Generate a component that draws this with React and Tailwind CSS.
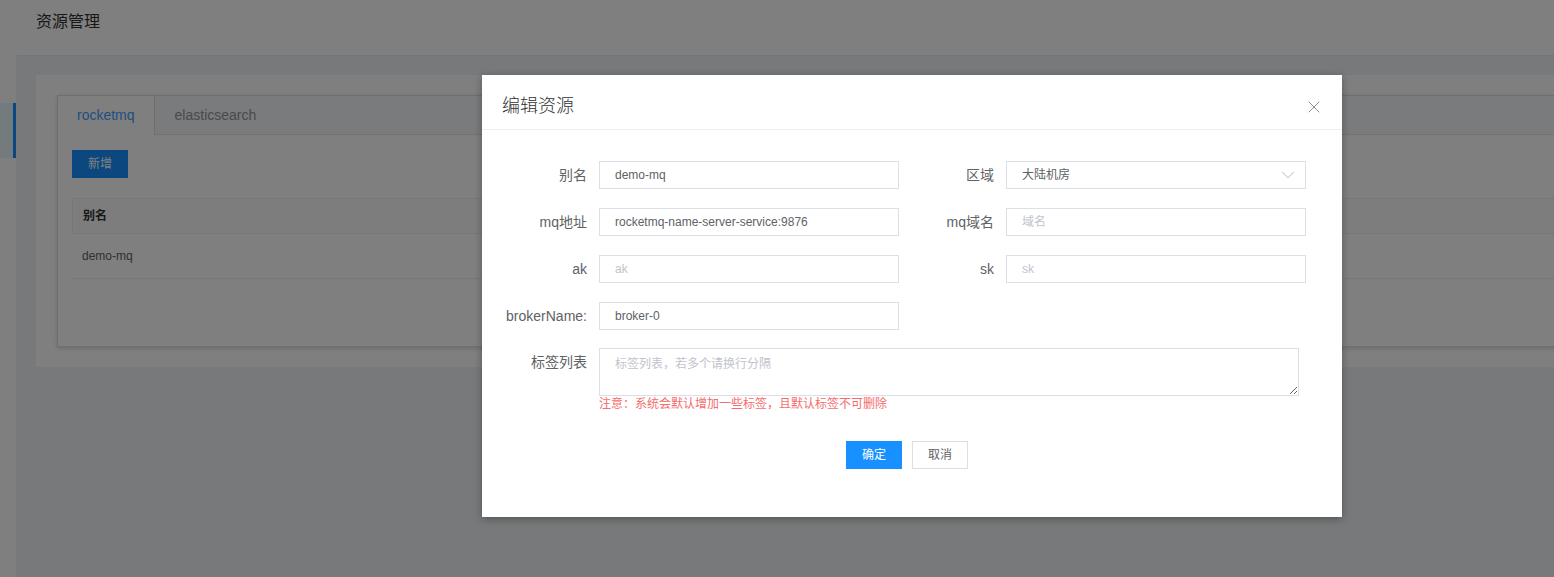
import { X, ChevronDown } from "lucide-react";

const inputCls =
  "w-[300px] h-[28px] border border-[#dcdfe6] bg-white px-[15px] text-[12px] text-[#606266] outline-none placeholder:text-[#c0c4cc]";

const LeftField = ({ label, value, placeholder }) => (
  <div className="flex w-[417px]">
    <label className="w-[105px] mr-[12px] text-right text-[14px] leading-[28px] text-[#606266]">
      {label}
    </label>
    <input className={inputCls} defaultValue={value} placeholder={placeholder} />
  </div>
);

const RightField = ({ label, value, placeholder }) => (
  <div className="flex">
    <label className="w-[95px] mr-[12px] text-right text-[14px] leading-[28px] text-[#606266]">
      {label}
    </label>
    <input className={inputCls} defaultValue={value} placeholder={placeholder} />
  </div>
);

export default function App() {
  return (
    <div className="relative w-[1554px] h-[577px] overflow-hidden bg-[#f0f2f5] flex font-['Liberation_Sans','Noto_Sans_CJK_SC',sans-serif]">
      {/* sidebar */}
      <aside className="w-[16px] shrink-0 bg-white">
        <div className="mt-[103px] h-[55px] bg-[#e6f7ff] border-r-[3px] border-[#1890ff]" />
      </aside>

      {/* main */}
      <main className="flex-1 flex flex-col min-w-0">
        <header className="h-[55px] shrink-0 bg-white pl-[20px] pt-[12px] shadow-[0_1px_2px_rgba(0,0,0,0.04)]">
          <h1 className="text-[16px] leading-[20px] text-[#303133]">资源管理</h1>
        </header>

        <div className="pt-[20px] pl-[20px]">
          <div className="bg-white pt-[20px] pl-[21px] pb-[20px] mr-[-100px]">
            <div className="border border-[#dcdfe6] bg-white h-[252px] shadow-[0_2px_4px_rgba(0,0,0,0.12),0_0_6px_rgba(0,0,0,0.04)]">
              <div className="flex h-[39px] bg-[#f5f7fa] border-b border-[#e4e7ed]">
                <div className="px-[19px] h-[39px] bg-white border-r border-[#dcdfe6] text-[14px] leading-[38px] text-[#409eff]">
                  rocketmq
                </div>
                <div className="px-[20px] h-[38px] text-[14px] leading-[38px] text-[#909399]">
                  elasticsearch
                </div>
              </div>
              <div className="py-[15px] px-[14px]">
                <button className="w-[56px] h-[28px] bg-[#1890ff] text-white text-[12px]">新增</button>
                <div className="mt-[20px]">
                  <div className="h-[36px] bg-[#fafafa] border border-[#ebeef5] pl-[10px] flex items-center text-[12px] font-bold text-[#303133]">
                    别名
                  </div>
                  <div className="h-[45px] border-b border-[#ebeef5] pl-[10px] flex items-center text-[12px] text-[#606266]">
                    demo-mq
                  </div>
                </div>
              </div>
            </div>
          </div>
        </div>
      </main>

      {/* mask */}
      <div className="absolute inset-0 bg-black/50" />

      {/* dialog */}
      <div className="absolute left-[482px] top-[75px] w-[860px] h-[442px] bg-white shadow-[0_2px_8px_rgba(0,0,0,0.3)]">
        <div className="relative h-[55px] border-b border-[#ebeef5] pl-[20px] pt-[19px]">
          <h2 className="text-[18px] leading-[24px] text-[#303133] font-light">编辑资源</h2>
          <X size={20} strokeWidth={1.2} className="absolute right-[18px] top-[22px] text-[#909399]" />
        </div>

        <div className="pt-[31px]">
          <div className="flex flex-col gap-[19px]">
            <div className="flex">
              <LeftField label="别名" value="demo-mq" />
              <div className="flex">
                <label className="w-[95px] mr-[12px] text-right text-[14px] leading-[28px] text-[#606266]">
                  区域
                </label>
                <div className="relative w-[300px] h-[28px] border border-[#dcdfe6] px-[15px] text-[12px] leading-[26px] text-[#606266]">
                  大陆机房
                  <ChevronDown
                    size={22}
                    strokeWidth={1.1}
                    className="absolute right-[6px] top-[2px] text-[#c0c4cc]"
                  />
                </div>
              </div>
            </div>
            <div className="flex">
              <LeftField label="mq地址" value="rocketmq-name-server-service:9876" />
              <RightField label="mq域名" placeholder="域名" />
            </div>
            <div className="flex">
              <LeftField label="ak" placeholder="ak" />
              <RightField label="sk" placeholder="sk" />
            </div>
            <div className="flex">
              <LeftField label="brokerName:" value="broker-0" />
            </div>
          </div>

          <div className="flex mt-[18px]">
            <label className="w-[105px] mr-[12px] text-right text-[14px] leading-[28px] text-[#606266]">
              标签列表
            </label>
            <div>
              <textarea
                className="block w-[700px] h-[48px] border border-[#dcdfe6] px-[15px] py-[5px] text-[12px] leading-[20px] text-[#606266] outline-none placeholder:text-[#c0c4cc]"
                placeholder="标签列表，若多个请换行分隔"
              />
              <p className="text-[12px] leading-[16px] text-[#f56c6c]">
                注意：系统会默认增加一些标签，且默认标签不可删除
              </p>
            </div>
          </div>

          <div className="flex gap-[10px] pl-[364px] mt-[29px]">
            <button className="w-[56px] h-[28px] bg-[#1890ff] text-white text-[12px]">确定</button>
            <button className="w-[56px] h-[28px] border border-[#dcdfe6] bg-white text-[#606266] text-[12px]">
              取消
            </button>
          </div>
        </div>
      </div>
    </div>
  );
}
